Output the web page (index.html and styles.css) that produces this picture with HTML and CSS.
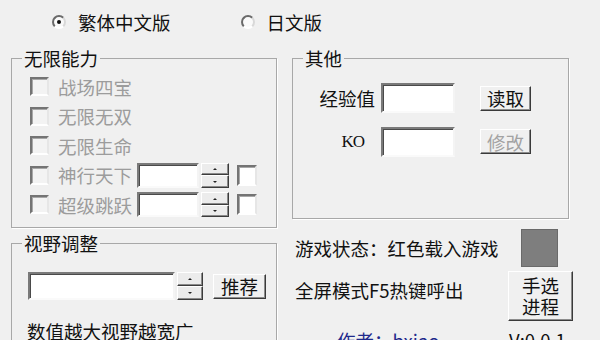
FILE: index.html
```html
<!DOCTYPE html>
<html lang="zh">
<head>
<meta charset="utf-8">
<title>修改器</title>
<link rel="stylesheet" href="styles.css">
</head>
<body>
<div class="app">
  <div class="lang-row">
    <label class="radio-item"><span class="radio checked"></span><span>繁体中文版</span></label>
    <label class="radio-item"><span class="radio"></span><span>日文版</span></label>
  </div>
  <div class="main">
    <div class="col-left">
      <fieldset class="group group-ability">
        <legend>无限能力</legend>
        <div class="check-row disabled"><span class="check"></span><span>战场四宝</span></div>
        <div class="check-row disabled"><span class="check"></span><span>无限无双</span></div>
        <div class="check-row disabled"><span class="check"></span><span>无限生命</span></div>
        <div class="check-row disabled">
          <span class="check"></span><span>神行天下</span>
          <span class="textbox tb-small"></span>
          <span class="spin"><span class="spin-btn"><i class="up"></i></span><span class="spin-btn"><i class="down"></i></span></span>
          <span class="check small-check"></span>
        </div>
        <div class="check-row disabled">
          <span class="check"></span><span>超级跳跃</span>
          <span class="textbox tb-small"></span>
          <span class="spin"><span class="spin-btn"><i class="up"></i></span><span class="spin-btn"><i class="down"></i></span></span>
          <span class="check small-check"></span>
        </div>
      </fieldset>
      <fieldset class="group group-view">
        <legend>视野调整</legend>
        <div class="view-row">
          <span class="textbox tb-view"></span>
          <span class="spin spin-view"><span class="spin-btn"><i class="up"></i></span><span class="spin-btn"><i class="down"></i></span></span>
          <span class="btn btn-rec">推荐</span>
        </div>
        <div class="hint">数值越大视野越宽广</div>
      </fieldset>
    </div>
    <div class="col-right">
      <fieldset class="group group-other">
        <legend>其他</legend>
        <div class="field-grid">
          <span class="flabel">经验值</span>
          <span class="textbox tb-field"></span>
          <span class="btn btn-small">读取</span>
          <span class="flabel ko">KO</span>
          <span class="textbox tb-field"></span>
          <span class="btn btn-small btn-disabled">修改</span>
        </div>
      </fieldset>
      <div class="status-row">
        <span>游戏状态：红色载入游戏</span>
        <span class="status-box"></span>
      </div>
      <div class="hotkey-row">
        <span class="hotkey-text">全屏模式F5热键呼出</span>
        <span class="btn btn-proc">手选<br>进程</span>
      </div>
      <div class="author-row">
        <span class="author">作者：bxiao</span>
        <span class="version">V:0.0.1</span>
      </div>
    </div>
  </div>
</div>
</body>
</html>
```
FILE: styles.css
```css
html, body {
  margin: 0;
  padding: 0;
  background: #f0f0f0;
}
body {
  width: 600px;
  height: 340px;
  overflow: hidden;
  font-family: "Noto Sans CJK SC", "Noto Sans", sans-serif;
  font-size: 18.5px;
  line-height: 20px;
  color: #111;
}
.app {
  width: 600px;
}
.lang-row {
  height: 44px;
  display: flex;
  align-items: center;
  padding-left: 52px;
}
.radio-item {
  display: flex;
  align-items: center;
  gap: 12px;
}
.radio-item + .radio-item {
  margin-left: 70px;
}
.radio {
  box-sizing: border-box;
  width: 14px;
  height: 14px;
  border-radius: 50%;
  border: 2px solid;
  border-color: #6a6a6a #d8d8d8 #ffffff #6a6a6a;
  background: #fafafa;
  display: flex;
  align-items: center;
  justify-content: center;
  flex: none;
}
.radio.checked::after {
  content: "";
  width: 4px;
  height: 4px;
  border-radius: 50%;
  background: #111;
}
.main {
  display: grid;
  grid-template-columns: 266px 277px;
  column-gap: 15px;
  padding-left: 11px;
  margin-top: 4px;
}
.group {
  margin: 0;
  border: 1px solid #a8a8a8;
  box-shadow: 1px 1px 0 #ffffff;
  padding: 0 10px;
  min-width: 0;
}
.group legend {
  padding: 0 2px;
  line-height: 20px;
  color: #111;
}
.group-ability {
  box-sizing: border-box;
  height: 180px;
  padding-top: 4px;
}
.check-row {
  height: 29.5px;
  display: flex;
  align-items: center;
}
.check-row.disabled {
  color: #9c9c9c;
}
.check {
  box-sizing: border-box;
  width: 19px;
  height: 19px;
  margin-left: 8px;
  margin-right: 9px;
  border: 2px solid;
  border-color: #747474 #e6e6e6 #ffffff #747474;
  box-shadow: inset 1px 1px 0 #a8a8a8;
  background: #f3f3f3;
  flex: none;
}
.small-check {
  width: 20px;
  height: 21px;
  margin-left: 8px;
  margin-right: 0;
  background: #ffffff;
}
.textbox {
  box-sizing: border-box;
  display: block;
  background: #ffffff;
  border: 2px solid;
  border-color: #7a7a7a #f4f4f4 #fafafa #7a7a7a;
  box-shadow: inset 1px 1px 0 #4a4a4a;
  flex: none;
}
.tb-small {
  width: 62px;
  height: 25px;
  margin-left: 5px;
}
.spin {
  display: flex;
  flex-direction: column;
  width: 28px;
  height: 25px;
  margin-left: 2px;
  flex: none;
}
.spin-btn {
  flex: 1;
  box-sizing: border-box;
  border: 1px solid;
  border-color: #ffffff #3c3c3c #3c3c3c #ffffff;
  box-shadow: inset -1px -1px 0 #8a8a8a;
  background: #ececec;
  display: flex;
  align-items: center;
  justify-content: center;
}
.spin-btn i {
  width: 0;
  height: 0;
  border-left: 2px solid transparent;
  border-right: 2px solid transparent;
}
.spin-btn i.up {
  border-bottom: 2px solid #222;
}
.spin-btn i.down {
  border-top: 2px solid #222;
}
.btn {
  box-sizing: border-box;
  display: flex;
  align-items: center;
  justify-content: center;
  background: #f0f0f0;
  border: 1px solid;
  border-color: #ffffff #3a3a3a #3a3a3a #ffffff;
  box-shadow: inset -1px -1px 0 #8c8c8c;
  color: #111;
  flex: none;
}
.btn-disabled {
  color: #a2a2a2;
}
.group-view {
  margin-top: 5px;
  height: 140px;
  padding-top: 19px;
}
.view-row {
  display: flex;
  align-items: center;
  padding-left: 6px;
}
.tb-view {
  width: 147px;
  height: 28px;
}
.spin-view {
  width: 26px;
  height: 28px;
}
.btn-rec {
  width: 53px;
  height: 25px;
  margin-left: 10px;
}
.hint {
  margin-top: 21px;
  padding-left: 5px;
}
.group-other {
  height: 171px;
  box-sizing: border-box;
  padding-top: 15px;
}
.field-grid {
  display: grid;
  grid-template-columns: 78px 74px 50px;
  grid-template-rows: 30px 29px;
  row-gap: 14px;
  column-gap: 0;
  align-items: center;
}
.flabel {
  text-align: right;
  padding-right: 6px;
}
.flabel.ko {
  font-family: "Liberation Serif", "DejaVu Serif", serif;
  font-size: 17px;
  padding-right: 17px;
  letter-spacing: -1px;
}
.tb-field {
  width: 74px;
  height: 30px;
}
.tb-field + .btn {
  margin-left: 25px;
}
.btn-small {
  width: 51px;
  height: 25px;
}
.status-row {
  display: flex;
  align-items: center;
  margin-top: 10px;
  padding-left: 3px;
}
.status-box {
  width: 37px;
  height: 38px;
  box-sizing: border-box;
  background: #7e7e7e;
  border: 1px solid #6a6a6a;
  margin-left: auto;
  margin-right: 11px;
}
.hotkey-row {
  display: flex;
  align-items: flex-start;
  margin-top: 4px;
  padding-left: 3px;
  margin-right: -4px;
}
.hotkey-text {
  margin-top: 9px;
}
.btn-proc {
  margin-left: auto;
  width: 65px;
  height: 50px;
  line-height: 21px;
  text-align: center;
}
.author-row {
  display: flex;
  margin-top: 9px;
  padding-left: 45px;
}
.author {
  color: #1f2a8c;
}
.version {
  margin-left: auto;
  width: 60px;
}
```
